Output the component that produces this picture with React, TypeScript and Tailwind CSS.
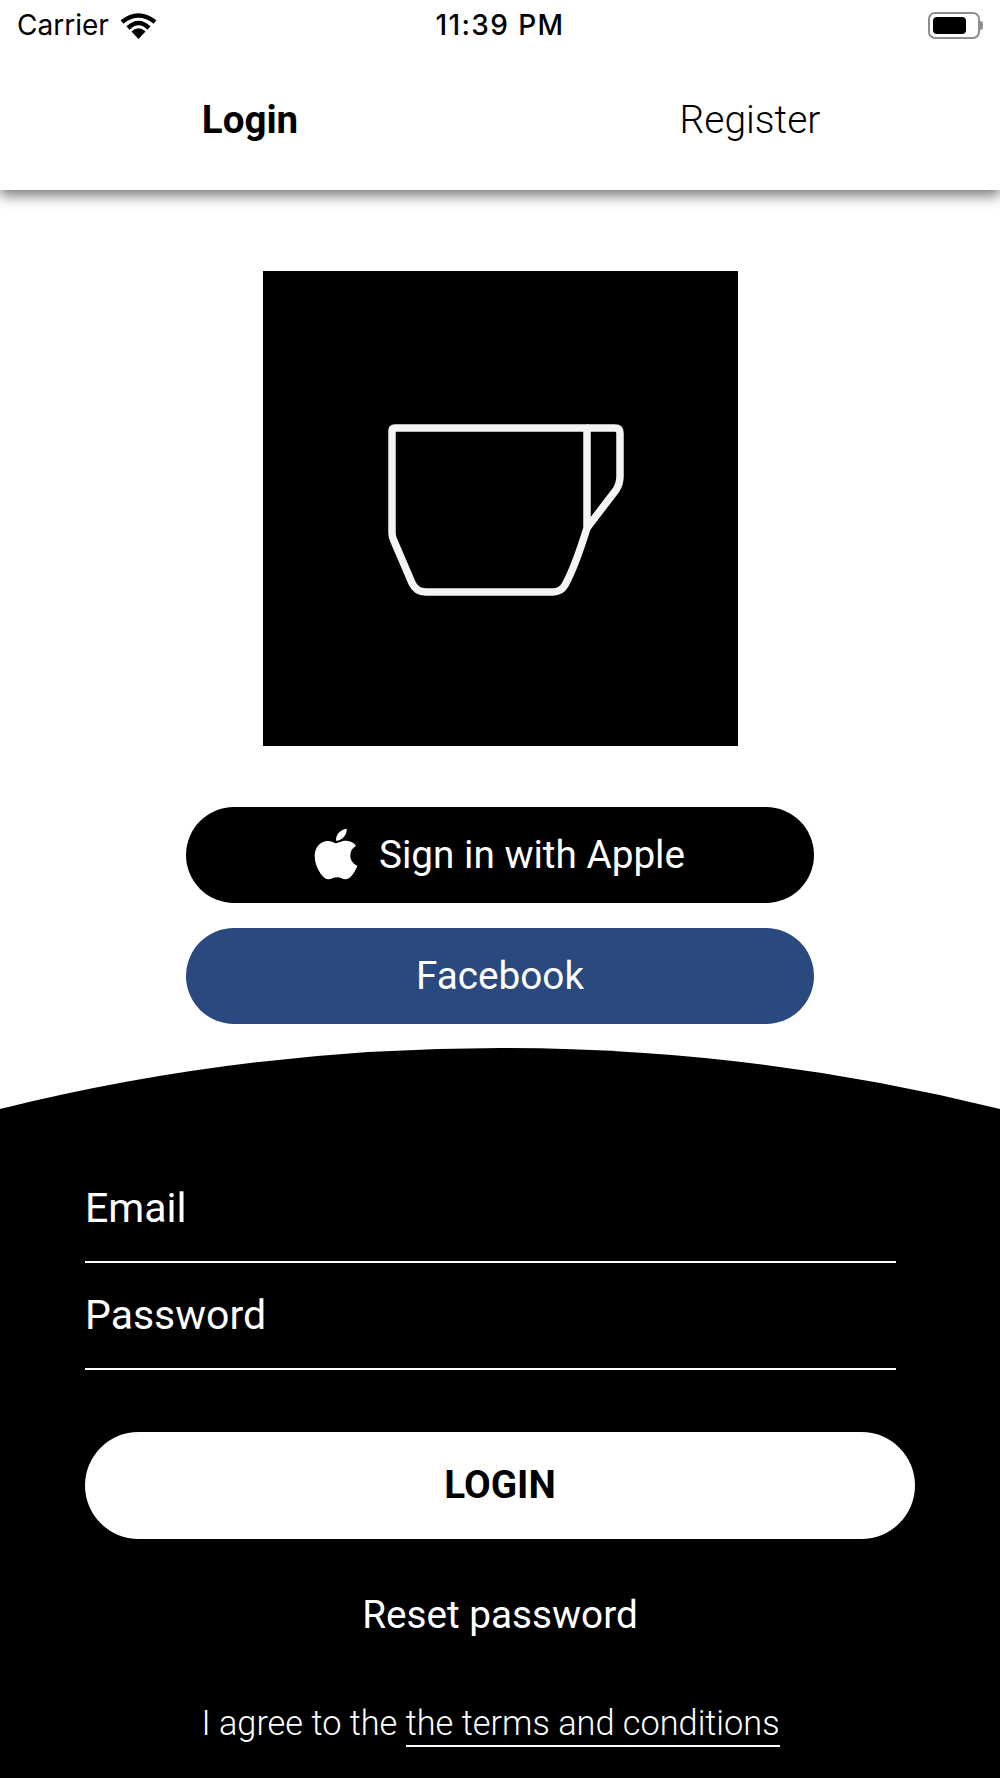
import { FaApple } from "react-icons/fa";

function WifiIcon() {
    return (
        <svg viewBox="0 0 37 27" className="w-[37px] h-[27px]" fill="none" stroke="#000" strokeWidth="4.5">
            <path d="M2 10 Q18.5 -3 35 10" />
            <path d="M8 16 Q18.5 6 29 16" />
            <path d="M18.5 27 L11.5 19.5 Q18.5 13 25.5 19.5 Z" fill="#000" stroke="none" />
        </svg>
    );
}

function BatteryIcon() {
    return (
        <div className="flex items-center">
            <div className="w-[52px] h-[27px] rounded-[7px] border-2 border-[#8e8e8e] p-[3px]">
                <div className="w-[33px] h-full rounded-[4px] bg-black" />
            </div>
            <div className="w-[3px] h-[9px] rounded-r-full bg-[#8e8e8e]" />
        </div>
    );
}

function CupLogo() {
    return (
        <svg viewBox="0 0 475 475" className="w-[475px] h-[475px]" fill="none" stroke="#f4f4f4" strokeWidth="7.5" strokeLinejoin="round">
            <path d="M324 157 H352 Q357 157 357 162 V205 Q357 213 353 219 L324 257" />
            <path d="M324 157 H132 Q129 157 129 160 V262 Q129 266 131 270 L149 312 Q153 321 163 321 H290 Q298 321 302 314 Q312 296 324 257 Z" />
        </svg>
    );
}

function PillButton({ className, children }: { className: string, children: React.ReactNode }) {
    return (
        <button className={`w-[628px] h-[96px] flex items-center justify-center rounded-full text-white text-[38.7px] ${className}`}>
            {children}
        </button>
    );
}

function Field({ label }: { label: string }) {
    return (
        <div className="w-[811px] h-[107px] flex items-center border-b-2 border-white text-white text-[41px]">
            {label}
        </div>
    );
}

export default function App() {
    return (
        <div className="w-[1000px] h-[1778px] bg-white overflow-hidden flex flex-col font-['Roboto',sans-serif]">
            <header className="h-[190px] shrink-0 bg-white shadow-[0_6px_12px_rgba(0,0,0,0.5)] flex flex-col">
                <div className="h-[50px] px-[17px] flex items-center justify-between text-black text-[28px] font-['Inter',sans-serif]">
                    <div className="flex items-center gap-[11px] w-[300px]">
                        <span>Carrier</span>
                        <WifiIcon />
                    </div>
                    <span className="font-medium tracking-[1.4px]">11:39 PM</span>
                    <div className="flex justify-end w-[300px]">
                        <BatteryIcon />
                    </div>
                </div>
                <nav className="flex text-black pt-[47px] leading-[46px]">
                    <div className="w-1/2 text-center font-bold text-[38.5px]">Login</div>
                    <div className="w-1/2 text-center font-light text-[39px]">Register</div>
                </nav>
            </header>

            <main className="flex flex-col items-center pt-[81px]">
                <div className="w-[475px] h-[475px] bg-black">
                    <CupLogo />
                </div>
                <div className="flex flex-col gap-[25px] mt-[61px]">
                    <PillButton className="bg-black gap-[14px] pr-[8px]">
                        <FaApple className="text-[58px] -mt-[3px]" />
                        <span>Sign in with Apple</span>
                    </PillButton>
                    <PillButton className="bg-[#2a4a7f]">Facebook</PillButton>
                </div>
            </main>

            <svg viewBox="0 0 1000 61" className="w-[1000px] h-[61px] mt-[24px] shrink-0 block" fill="#000">
                <path d="M0 61 A2080 2080 0 0 1 1000 61 Z" />
            </svg>

            <section className="flex-1 bg-black flex flex-col pl-[85px]">
                <div className="flex flex-col pt-[47px]">
                    <Field label="Email" />
                    <Field label="Password" />
                </div>
                <button className="w-[830px] h-[107px] mt-[62px] rounded-full bg-white text-black text-[38.7px] font-bold">
                    LOGIN
                </button>
                <div className="w-[830px] mt-[47px] text-center text-white text-[38.7px]">Reset password</div>
                <div className="w-[811px] mt-[54px] text-center text-white text-[34.3px] font-[350]">
                    I agree to the <span className="border-b-2 border-white pb-[2px]">the terms and conditions</span>
                </div>
            </section>
        </div>
    );
}
